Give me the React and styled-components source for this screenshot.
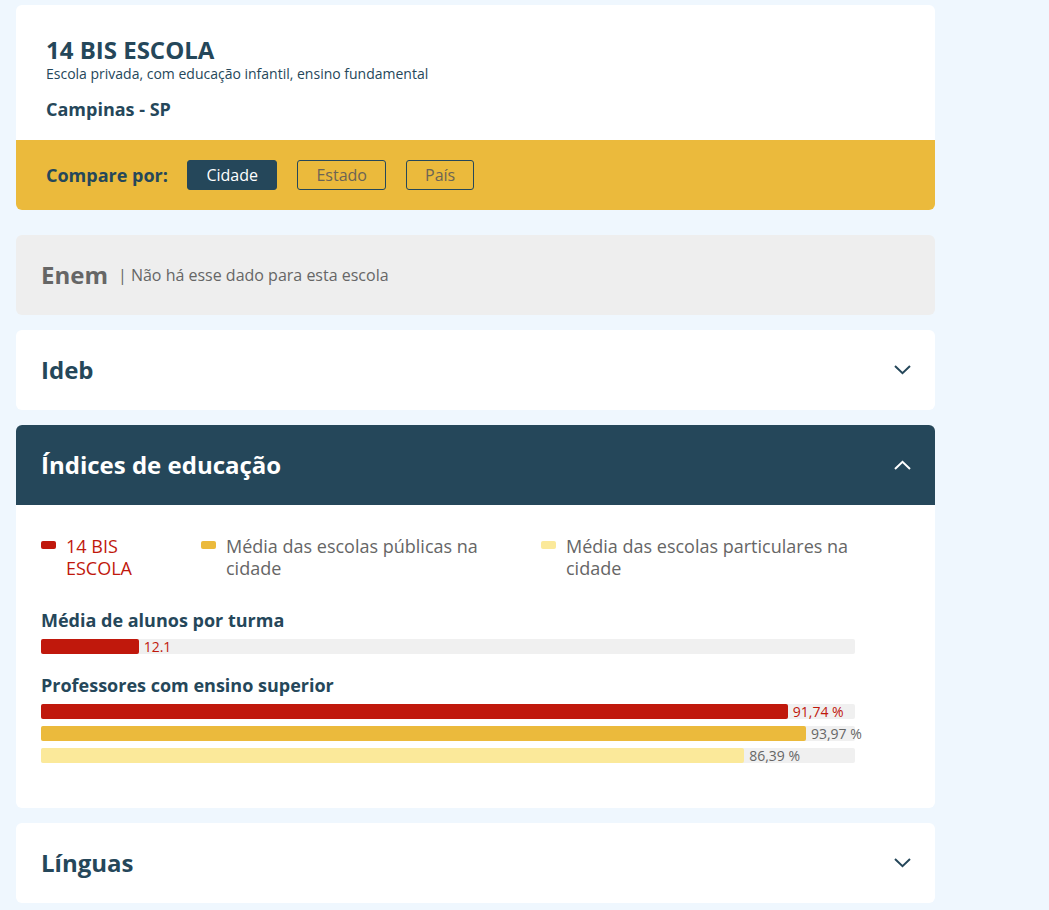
import React from 'react'
import styled, { createGlobalStyle } from 'styled-components'

const GlobalStyle = createGlobalStyle`
  body {
    margin: 0;
    background: #eff7fe;
    font-family: 'Open Sans', 'Noto Sans', sans-serif;
    color: #25475a;
  }
`

const Page = styled.main`
  width: 919px;
  padding: 5px 0 20px 16px;
  display: flex;
  flex-direction: column;
  gap: 15px;
`

const SchoolCard = styled.section`
  background: #fff;
  border-radius: 6px;
  overflow: hidden;
  margin-bottom: 10px;
`

const SchoolInfo = styled.div`
  padding: 31px 30px 19px;
  h1 {
    margin: 0 0 1px;
    font-size: 24px;
    line-height: 28px;
    font-weight: 700;
  }
  p {
    margin: 0 0 14px;
    font-size: 14px;
    line-height: 18px;
    color: #25475a;
  }
  h2 {
    margin: 0;
    font-size: 18px;
    line-height: 24px;
    font-weight: 700;
  }
`

const CompareBar = styled.div`
  background: #ebba3c;
  height: 70px;
  padding: 0 30px;
  display: flex;
  align-items: center;
  span {
    font-size: 18px;
    font-weight: 700;
    margin-right: 19px;
  }
`

const CompareButton = styled.button`
  height: 30px;
  padding: 0 ${(p) => p.$pad}px;
  margin-right: 20px;
  border-radius: 3px;
  border: 1px solid #25475a;
  background: ${(p) => (p.$active ? '#25475a' : 'transparent')};
  color: ${(p) => (p.$active ? '#fff' : '#6b6455')};
  font-family: inherit;
  font-size: 16px;
  cursor: pointer;
`

const Panel = styled.section`
  background: ${(p) => (p.$muted ? '#eeeeee' : '#fff')};
  border-radius: 6px;
  overflow: hidden;
`

const PanelHeader = styled.header`
  height: 80px;
  padding: 0 24px 1px 25px;
  box-sizing: border-box;
  display: flex;
  align-items: center;
  background: ${(p) => (p.$open ? '#25475a' : 'transparent')};
  color: ${(p) => (p.$open ? '#fff' : p.$muted ? '#666' : '#25475a')};
  h3 {
    margin: 0;
    font-size: 24px;
    font-weight: 700;
    flex: ${(p) => (p.$muted ? 'none' : '1')};
  }
`

const Note = styled.span`
  flex: 1;
  margin-left: 10px;
  font-size: 16px;
  color: #666;
`

const Chevron = styled.svg`
  width: 17px;
  height: 10px;
`

const PanelBody = styled.div`
  padding: 30px 25px 45px;
`

const Legend = styled.div`
  display: grid;
  grid-template-columns: 160px 340px 1fr;
  margin-bottom: 29px;
`

const LegendItem = styled.div`
  display: flex;
  align-items: flex-start;
  gap: 10px;
  font-size: 18px;
  line-height: 22px;
  color: ${(p) => p.$text};
  padding-right: 30px;
  &::before {
    content: '';
    flex: none;
    width: 15px;
    height: 8px;
    margin-top: 6px;
    border-radius: 2px;
    background: ${(p) => p.$color};
  }
`

const Metric = styled.div`
  margin-bottom: 19px;
  &:last-child {
    margin-bottom: 0;
  }
  h4 {
    margin: 0 0 7px;
    font-size: 18px;
    line-height: 24px;
    font-weight: 700;
  }
`

const Bars = styled.div`
  display: flex;
  flex-direction: column;
  gap: 7px;
`

const Track = styled.div`
  width: 814px;
  height: 15px;
  background: #f0f0f0;
  border-radius: 2px;
  display: flex;
  align-items: center;
`

const Fill = styled.div`
  height: 100%;
  border-radius: 2px;
  background: ${(p) => p.$color};
  flex: none;
`

const Value = styled.span`
  margin-left: 5px;
  font-size: 14px;
  line-height: 15px;
  white-space: nowrap;
  color: ${(p) => p.$color};
`

const ChevronIcon = ({ up, color }) => (
  <Chevron viewBox="0 0 17 10" fill="none">
    <polyline
      points={up ? '1,9 8.5,1.8 16,9' : '1,1 8.5,8.2 16,1'}
      stroke={color}
      strokeWidth="2"
    />
  </Chevron>
)

const metrics = [
  {
    title: 'Média de alunos por turma',
    bars: [{ pct: 12, label: '12.1', color: '#c0180c', text: '#c0180c' }],
  },
  {
    title: 'Professores com ensino superior',
    bars: [
      { pct: 91.74, label: '91,74 %', color: '#c0180c', text: '#c0180c' },
      { pct: 93.97, label: '93,97 %', color: '#ebba3c', text: '#666' },
      { pct: 86.39, label: '86,39 %', color: '#fbe99a', text: '#666' },
    ],
  },
]

const App = () => {
  return (
    <>
      <GlobalStyle />
      <Page>
        <SchoolCard>
          <SchoolInfo>
            <h1>14 BIS ESCOLA</h1>
            <p>Escola privada, com educação infantil, ensino fundamental</p>
            <h2>Campinas - SP</h2>
          </SchoolInfo>
          <CompareBar>
            <span>Compare por:</span>
            <CompareButton $active $pad={18.5}>Cidade</CompareButton>
            <CompareButton $pad={18}>Estado</CompareButton>
            <CompareButton $pad={18}>País</CompareButton>
          </CompareBar>
        </SchoolCard>

        <Panel $muted>
          <PanelHeader $muted>
            <h3>Enem</h3>
            <Note>| Não há esse dado para esta escola</Note>
          </PanelHeader>
        </Panel>

        <Panel>
          <PanelHeader>
            <h3>Ideb</h3>
            <ChevronIcon color="#25475a" />
          </PanelHeader>
        </Panel>

        <Panel>
          <PanelHeader $open>
            <h3>Índices de educação</h3>
            <ChevronIcon up color="#fff" />
          </PanelHeader>
          <PanelBody>
            <Legend>
              <LegendItem $color="#c0180c" $text="#c0180c">14 BIS ESCOLA</LegendItem>
              <LegendItem $color="#ebba3c" $text="#666">
                Média das escolas públicas na cidade
              </LegendItem>
              <LegendItem $color="#fbe99a" $text="#666">
                Média das escolas particulares na cidade
              </LegendItem>
            </Legend>
            {metrics.map((m) => (
              <Metric key={m.title}>
                <h4>{m.title}</h4>
                <Bars>
                  {m.bars.map((b) => (
                    <Track key={b.label}>
                      <Fill $color={b.color} style={{ width: `${b.pct}%` }} />
                      <Value $color={b.text}>{b.label}</Value>
                    </Track>
                  ))}
                </Bars>
              </Metric>
            ))}
          </PanelBody>
        </Panel>

        <Panel>
          <PanelHeader>
            <h3>Línguas</h3>
            <ChevronIcon color="#25475a" />
          </PanelHeader>
        </Panel>
      </Page>
    </>
  )
}

export default App
